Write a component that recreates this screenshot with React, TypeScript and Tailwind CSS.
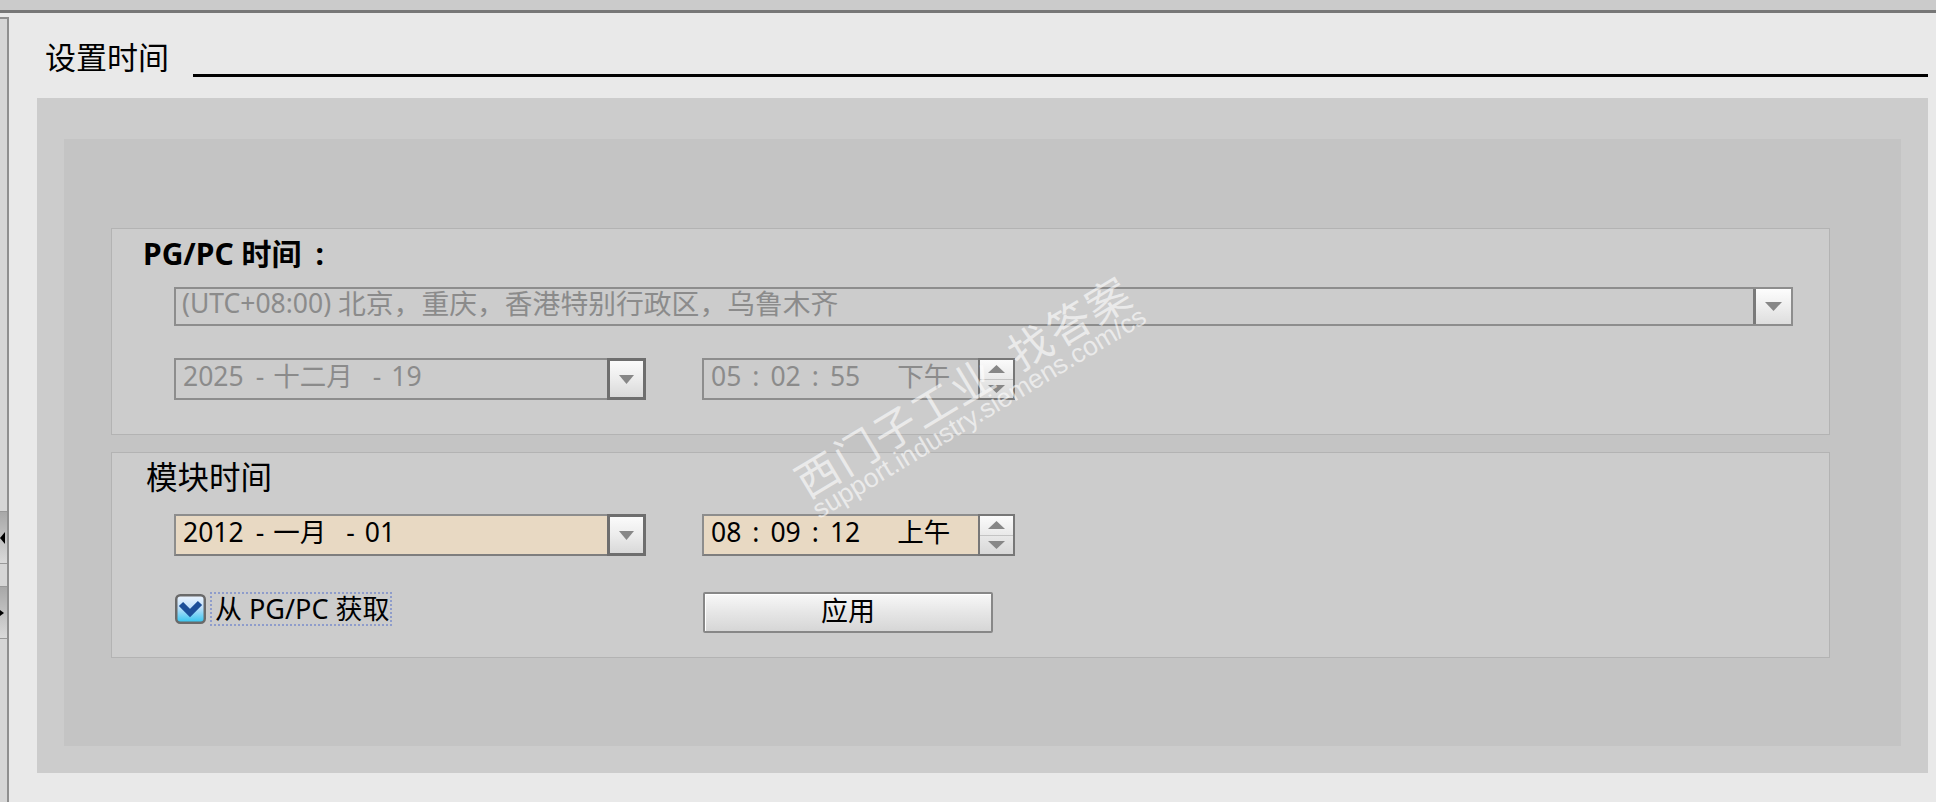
import React from "react";

function Tri({ up = false, w = 16, h = 8 }: { up?: boolean; w?: number; h?: number }) {
  return (
    <svg width={w} height={h} viewBox={`0 0 ${w} ${h}`}>
      <polygon
        points={up ? `0,${h} ${w / 2},0 ${w},${h}` : `0,0 ${w},0 ${w / 2},${h}`}
        fill="#878787"
      />
    </svg>
  );
}

function DateCombo({ enabled, parts }: { enabled?: boolean; parts: string[] }) {
  const [year, month, day] = parts;
  return (
    <div className="flex h-[42px] w-[472px] shrink-0">
      <div
        className={
          enabled
            ? "flex flex-1 items-center border-2 border-r-0 border-[#8d8d8d] border-b-[#7e7e7e] bg-[#e8d9c3] pb-[6px] pl-[7px] text-[26.5px] leading-none text-black"
            : "flex flex-1 items-center border-2 border-r-0 border-[#8d8d8d] pb-[6px] pl-[7px] text-[26.5px] leading-none text-[#8b8b8b]"
        }
      >
        <span>{year}</span>
        <span className="ml-[12px]">-</span>
        <span className="ml-[9px]">{month}</span>
        <span className="ml-[20px]">-</span>
        <span className="ml-[10px]">{day}</span>
      </div>
      <div className="flex w-[39px] shrink-0 items-center justify-center border-[3px] border-[#6e6e6e] bg-linear-to-b from-[#fbfbfb] via-[#ececec] to-[#d9d9d9]">
        <Tri w={15} h={9} />
      </div>
    </div>
  );
}

function TimeSpin({ enabled, parts }: { enabled?: boolean; parts: string[] }) {
  const [hh, mm, ss, ampm] = parts;
  return (
    <div className="ml-[56px] flex h-[42px] w-[313px] shrink-0">
      <div
        className={
          enabled
            ? "flex flex-1 items-center border-2 border-r-0 border-[#8d8d8d] border-b-[#7e7e7e] bg-[#e8d9c3] pb-[6px] pl-[7px] text-[26.5px] leading-none text-black"
            : "flex flex-1 items-center border-2 border-r-0 border-[#8d8d8d] pb-[6px] pl-[7px] text-[26.5px] leading-none text-[#8b8b8b]"
        }
      >
        <span>{hh}</span>
        <span className="mx-[11px]">:</span>
        <span>{mm}</span>
        <span className="mx-[11px]">:</span>
        <span>{ss}</span>
        <span className="ml-[37px]">{ampm}</span>
      </div>
      <div className="flex w-[37px] shrink-0 flex-col border-2 border-[#777777] bg-linear-to-b from-[#fbfbfb] via-[#e9e9e9] to-[#d8d8d8]">
        <div className="flex flex-1 items-center justify-center border-b border-[#c4c4c4]">
          <Tri up w={17} h={8} />
        </div>
        <div className="flex flex-1 items-center justify-center">
          <Tri w={17} h={8} />
        </div>
      </div>
    </div>
  );
}

function TimezoneCombo() {
  return (
    <div className="flex h-[39px] border-2 border-[#8d8d8d]">
      <div className="flex flex-1 items-center whitespace-pre pb-[6px] pl-[6px] text-[26.5px] leading-none text-[#8b8b8b]">
        <span>(UTC+08:00) </span>
        <span className="text-[27.8px]">北京，重庆，香港特别行政区，乌鲁木齐</span>
      </div>
      <div className="flex w-[38px] shrink-0 items-center justify-center border-l-[3px] border-[#7a7a7a] bg-linear-to-b from-[#fdfdfd] via-[#eeeeee] to-[#dedede]">
        <Tri w={17} h={9} />
      </div>
    </div>
  );
}

function CheckBox() {
  return (
    <svg width={31} height={30} viewBox="0 0 31 30" className="ml-[1px] mt-[2px] shrink-0">
      <defs>
        <linearGradient id="cbFill" x1="0" y1="0" x2="0" y2="1">
          <stop offset="0" stopColor="#eef5ff" />
          <stop offset="0.45" stopColor="#bfe0fb" />
          <stop offset="1" stopColor="#2fc4ef" />
        </linearGradient>
      </defs>
      <rect x="1.25" y="1.25" width="28.5" height="27.5" rx="4" fill="url(#cbFill)" stroke="#6a6a6a" strokeWidth="2.5" />
      <polyline points="6,10 15,19 25,9" fill="none" stroke="#1c4e98" strokeWidth="6" strokeLinejoin="miter" />
    </svg>
  );
}

function LeftStrip() {
  return (
    <div className="mt-[4px] flex w-[9px] shrink-0 flex-col border-r-2 border-t-2 border-[#8f8f8f] bg-[#d6d6d6]">
      <div className="mt-[492px] flex h-[53px] items-center border-y border-[#999999] bg-linear-to-b from-[#a8a8a8] to-[#dadada]">
        <svg width={5} height={12} viewBox="0 0 5 12">
          <polygon points="0,6 5,0 5,12" fill="#000" />
        </svg>
      </div>
      <div className="mt-[22px] flex h-[53px] items-center border-y border-[#999999] bg-linear-to-b from-[#a8a8a8] to-[#dadada]">
        <svg width={4} height={6} viewBox="0 0 4 6">
          <polygon points="0,0 4,3 0,6" fill="#000" />
        </svg>
      </div>
    </div>
  );
}

export default function App() {
  return (
    <div className="relative flex h-[802px] w-[1936px] flex-col overflow-hidden bg-[#e9e9e9] font-['Noto_Sans','Noto_Sans_CJK_SC',sans-serif] text-black">
      <div className="h-[10px] shrink-0 bg-[#cbcbcb]" />
      <div className="h-[3px] shrink-0 bg-[#777777]" />
      <div className="flex flex-1">
        <LeftStrip />
        <div className="flex flex-1 flex-col pl-[28px] pr-[8px]">
          <div className="flex h-[85px] shrink-0">
            <h1 className="ml-[8px] mt-[29px] text-[31px] font-normal leading-[31px]">设置时间</h1>
            <div className="ml-[24px] mt-[61px] h-[3px] flex-1 bg-black" />
          </div>
          <div className="flex h-[675px] shrink-0 flex-col bg-[#cccccc] px-[27px] pb-[27px] pt-[41px]">
            <div className="flex flex-1 flex-col bg-[#c4c4c4] pl-[47px] pr-[71px] pt-[89px]">
              <div className="flex h-[207px] shrink-0 flex-col border border-[#b3b3b3] bg-[#cccccc]">
                <div className="ml-[31px] mt-[7px] flex text-[30px] font-bold leading-[36px]">
                  <span>PG/PC 时间</span>
                  <span className="ml-[14px]">:</span>
                </div>
                <div className="ml-[62px] mr-[36px] mt-[15px]">
                  <TimezoneCombo />
                </div>
                <div className="ml-[62px] mt-[32px] flex">
                  <DateCombo parts={["2025", "十二月", "19"]} />
                  <TimeSpin parts={["05", "02", "55", "下午"]} />
                </div>
              </div>
              <div className="mt-[17px] flex h-[206px] shrink-0 flex-col border border-[#b3b3b3] bg-[#cccccc]">
                <div className="ml-[34px] mt-[8px] text-[31.5px] leading-[31.5px]">模块时间</div>
                <div className="ml-[62px] mt-[21.5px] flex">
                  <DateCombo enabled parts={["2012", "一月", "01"]} />
                  <TimeSpin enabled parts={["08", "09", "12", "上午"]} />
                </div>
                <div className="ml-[62px] mt-[36px] flex items-start">
                  <div className="flex w-[529px] shrink-0 items-start">
                    <CheckBox />
                    <div className="ml-[4px] flex h-[34px] w-[182px] items-center border-2 border-dotted border-[#8e9ccb] pb-[2px] pl-[3px] text-[27px] leading-none whitespace-pre">
                      从 PG/PC 获取
                    </div>
                  </div>
                  <button className="flex h-[41px] w-[290px] items-center justify-center rounded-[2px] border-2 border-[#878787] bg-linear-to-b from-[#f8f8f8] via-[#e6e6e6] to-[#d6d6d6] pb-[5px] text-[27px] leading-none text-black shadow-[inset_1px_1px_0_#ffffff]">
                    应用
                  </button>
                </div>
              </div>
            </div>
          </div>
        </div>
      </div>
      <div className="pointer-events-none absolute left-[969px] top-[396px] flex -translate-x-1/2 -translate-y-1/2 rotate-[-31deg] flex-col items-center text-white/60">
        <div className="whitespace-pre font-['Noto_Sans_CJK_SC',sans-serif] text-[43px] leading-[40px] tracking-[2px]">西门子工业  找答案</div>
        <div className="whitespace-pre font-['Liberation_Sans',sans-serif] text-[26.5px] leading-[27px]">support.industry.siemens.com/cs</div>
      </div>
    </div>
  );
}
